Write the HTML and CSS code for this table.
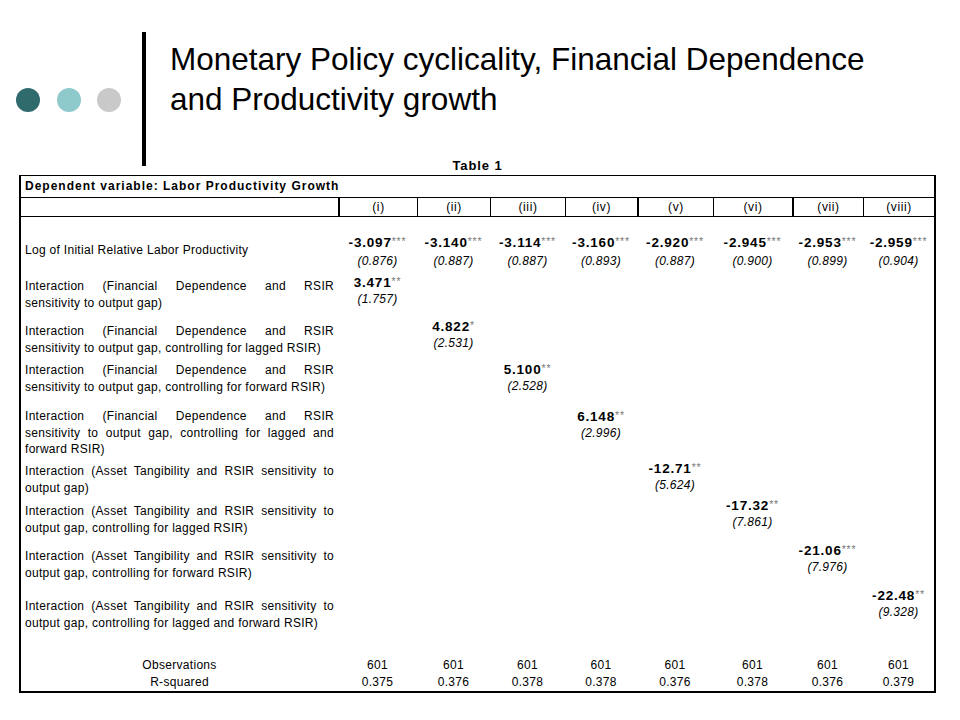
FILE: index.html
```html
<!DOCTYPE html>
<html>
<head>
<meta charset="utf-8">
<title>Monetary Policy cyclicality</title>
<link rel="stylesheet" href="styles.css">
</head>
<body>
<div class="slide">
  <header class="head">
    <div class="dots"><span class="dot d1"></span><span class="dot d2"></span><span class="dot d3"></span></div>
    <div class="rule"></div>
    <h1 class="title">Monetary Policy cyclicality, Financial Dependence<br>and Productivity growth</h1>
  </header>
  <section class="tbl">
    <div class="cap">Table 1</div>
    <table class="reg">
      <colgroup>
        <col class="c-lab"><col class="c1"><col class="c2"><col class="c3"><col class="c4"><col class="c5"><col class="c6"><col class="c7"><col class="c8">
      </colgroup>
      <tr class="dep"><td colspan="9">Dependent variable: Labor Productivity Growth</td></tr>
      <tr class="hdr"><td></td><td class="t">(i)</td><td class="n">(ii)</td><td class="n">(iii)</td><td class="n">(iv)</td><td class="t">(v)</td><td class="n">(vi)</td><td class="t">(vii)</td><td class="n">(viii)</td></tr>
      <tr class="r-log">
        <td class="lab">Log of Initial Relative Labor Productivity</td>
        <td class="v"><span class="b">-3.097<span class="st">***</span></span><span class="se">(0.876)</span></td>
        <td class="v"><span class="b">-3.140<span class="st">***</span></span><span class="se">(0.887)</span></td>
        <td class="v"><span class="b">-3.114<span class="st">***</span></span><span class="se">(0.887)</span></td>
        <td class="v"><span class="b">-3.160<span class="st">***</span></span><span class="se">(0.893)</span></td>
        <td class="v"><span class="b">-2.920<span class="st">***</span></span><span class="se">(0.887)</span></td>
        <td class="v"><span class="b">-2.945<span class="st">***</span></span><span class="se">(0.900)</span></td>
        <td class="v"><span class="b">-2.953<span class="st">***</span></span><span class="se">(0.899)</span></td>
        <td class="v"><span class="b">-2.959<span class="st">***</span></span><span class="se">(0.904)</span></td>
      </tr>
      <tr class="r-fd1">
        <td class="lab"><span class="jl">Interaction (Financial Dependence and RSIR</span><span class="ll">sensitivity to output gap)</span></td>
        <td class="v"><span class="b">3.471<span class="st">**</span></span><span class="se">(1.757)</span></td>
        <td></td><td></td><td></td><td></td><td></td><td></td><td></td>
      </tr>
      <tr class="r-fd2">
        <td class="lab"><span class="jl">Interaction (Financial Dependence and RSIR</span><span class="ll">sensitivity to output gap, controlling for lagged RSIR)</span></td>
        <td></td>
        <td class="v"><span class="b">4.822<span class="st">*</span></span><span class="se">(2.531)</span></td>
        <td></td><td></td><td></td><td></td><td></td><td></td>
      </tr>
      <tr class="r-fd3">
        <td class="lab"><span class="jl">Interaction (Financial Dependence and RSIR</span><span class="ll">sensitivity to output gap, controlling for forward RSIR)</span></td>
        <td></td><td></td>
        <td class="v"><span class="b">5.100<span class="st">**</span></span><span class="se">(2.528)</span></td>
        <td></td><td></td><td></td><td></td><td></td>
      </tr>
      <tr class="r-fd4">
        <td class="lab"><span class="jl">Interaction (Financial Dependence and RSIR</span><span class="jl">sensitivity to output gap, controlling for lagged and</span><span class="ll">forward RSIR)</span></td>
        <td></td><td></td><td></td>
        <td class="v"><span class="b">6.148<span class="st">**</span></span><span class="se">(2.996)</span></td>
        <td></td><td></td><td></td><td></td>
      </tr>
      <tr class="r-at1">
        <td class="lab"><span class="jl">Interaction (Asset Tangibility and RSIR sensitivity to</span><span class="ll">output gap)</span></td>
        <td></td><td></td><td></td><td></td>
        <td class="v"><span class="b">-12.71<span class="st">**</span></span><span class="se">(5.624)</span></td>
        <td></td><td></td><td></td>
      </tr>
      <tr class="r-at2">
        <td class="lab"><span class="jl">Interaction (Asset Tangibility and RSIR sensitivity to</span><span class="ll">output gap, controlling for lagged RSIR)</span></td>
        <td></td><td></td><td></td><td></td><td></td>
        <td class="v"><span class="b">-17.32<span class="st">**</span></span><span class="se">(7.861)</span></td>
        <td></td><td></td>
      </tr>
      <tr class="r-at3">
        <td class="lab"><span class="jl">Interaction (Asset Tangibility and RSIR sensitivity to</span><span class="ll">output gap, controlling for forward RSIR)</span></td>
        <td></td><td></td><td></td><td></td><td></td><td></td>
        <td class="v"><span class="b">-21.06<span class="st">***</span></span><span class="se">(7.976)</span></td>
        <td></td>
      </tr>
      <tr class="r-at4">
        <td class="lab"><span class="jl">Interaction (Asset Tangibility and RSIR sensitivity to</span><span class="ll">output gap, controlling for lagged and forward RSIR)</span></td>
        <td></td><td></td><td></td><td></td><td></td><td></td><td></td>
        <td class="v"><span class="b">-22.48<span class="st">**</span></span><span class="se">(9.328)</span></td>
      </tr>
      <tr class="r-obs">
        <td class="lab">Observations<br>R-squared</td>
        <td class="o">601<br>0.375</td>
        <td class="o">601<br>0.376</td>
        <td class="o">601<br>0.378</td>
        <td class="o">601<br>0.378</td>
        <td class="o">601<br>0.376</td>
        <td class="o">601<br>0.378</td>
        <td class="o">601<br>0.376</td>
        <td class="o">601<br>0.379</td>
      </tr>
    </table>
  </section>
</div>
</body>
</html>
```

FILE: styles.css
```css
html, body {
  margin: 0;
  padding: 0;
  background: #fff;
}
body {
  font-family: "Liberation Sans", Arial, sans-serif;
  color: #000;
}
.slide {
  width: 960px;
  height: 720px;
  overflow: hidden;
}

/* ---------- header ---------- */
.head {
  display: flex;
  align-items: center;
  height: 134px;
  padding-top: 32px;
}
.dots {
  display: flex;
  gap: 16.5px;
  padding-left: 16px;
  margin-top: 2px;
}
.dot {
  width: 24px;
  height: 24px;
  border-radius: 50%;
}
.d1 { background: #2f6a6d; }
.d2 { background: #8ec9cc; }
.d3 { background: #c9c9c9; }
.rule {
  align-self: stretch;
  width: 4px;
  margin-left: 21px;
  background: #000;
}
.title {
  align-self: flex-start;
  margin: 7px 0 0 24px;
  font-size: 31.5px;
  line-height: 40px;
  font-weight: normal;
}

/* ---------- table ---------- */
.tbl {
  margin-top: -9px;
  padding-left: 19px;
}
.cap {
  width: 917px;
  text-align: center;
  font-weight: bold;
  font-size: 13px;
  line-height: 18px;
  letter-spacing: 0.9px;
}
.reg {
  width: 917px;
  table-layout: fixed;
  border-spacing: 0;
  border-top: 1px solid #000;
  border-left: 2px solid #000;
  border-right: 2px solid #000;
  border-bottom: 2px solid #000;
  font-size: 12px;
  letter-spacing: 0.3px;
}
.c-lab { width: 317px; }
.c1 { width: 79px; }
.c2 { width: 73px; }
.c3 { width: 75px; }
.c4 { width: 72px; }
.c5 { width: 76px; }
.c6 { width: 79px; }
.c7 { width: 71px; }
.c8 { width: 71px; }

.reg td {
  padding: 0;
  vertical-align: top;
}
.dep { height: 22px; }
.dep td {
  padding: 0 4px;
  border-bottom: 1px solid #000;
  font-weight: bold;
  line-height: 21px;
  letter-spacing: 1px;
}
.hdr { height: 19px; }
.hdr td {
  border-bottom: 1px solid #000;
  text-align: center;
  line-height: 18px;
  letter-spacing: 0.6px;
}
.hdr td.t { border-left: 2px solid #000; }
.hdr td.n { border-left: 1px solid #000; }

.reg td.lab {
  padding-left: 4px;
  padding-right: 4px;
  line-height: 16.5px;
}
.jl {
  display: block;
  text-align: justify;
  text-align-last: justify;
}
.ll {
  display: block;
}
.v { text-align: center; }
.b {
  display: block;
  font-weight: bold;
  font-size: 13.5px;
  line-height: 17px;
  letter-spacing: 0.8px;
}
.st {
  font-weight: normal;
  font-size: 10.5px;
  line-height: 1;
  color: #7a7a7a;
  letter-spacing: 0.8px;
  vertical-align: 2px;
  margin-left: 0;
}
.se {
  display: block;
  font-style: italic;
  line-height: 16px;
}

/* row geometry (row heights include cell padding) */
.r-log { height: 55px; }
.r-log td.lab { padding-top: 25px; }
.r-log td.v { padding-top: 16.5px; }
.r-log .se { margin-top: 2.5px; }

.r-fd1 { height: 41px; }
.r-fd1 td.lab { padding-top: 6px; }
.r-fd1 td.v { padding-top: 1.5px; }

.r-fd2 { height: 44px; }
.r-fd2 td.lab { padding-top: 10px; }
.r-fd2 td.v { padding-top: 4.5px; }

.r-fd3 { height: 42px; }
.r-fd3 td.lab { padding-top: 5px; }
.r-fd3 td.v { padding-top: 3.5px; }

.r-fd4 { height: 60px; }
.r-fd4 td.lab { padding-top: 9px; }
.r-fd4 td.v { padding-top: 8.5px; }

.r-at1 { height: 38px; }
.r-at1 td.lab { padding-top: 4px; }
.r-at1 td.v { padding-top: 0.5px; }

.r-at2 { height: 41px; }
.r-at2 td.lab { padding-top: 6px; }
.r-at2 td.v { padding-top: 0; }

.r-at3 { height: 46px; }
.r-at3 td.lab { padding-top: 10px; }
.r-at3 td.v { padding-top: 3.5px; }

.r-at4 { height: 56px; }
.r-at4 td.lab { padding-top: 14px; }
.r-at4 td.v { padding-top: 2.5px; }

.r-obs { height: 51px; }
.r-obs td.lab {
  padding-top: 17px;
  text-align: center;
  line-height: 17px;
}
.r-obs td.o {
  padding-top: 17px;
  text-align: center;
  line-height: 17px;
}
```
